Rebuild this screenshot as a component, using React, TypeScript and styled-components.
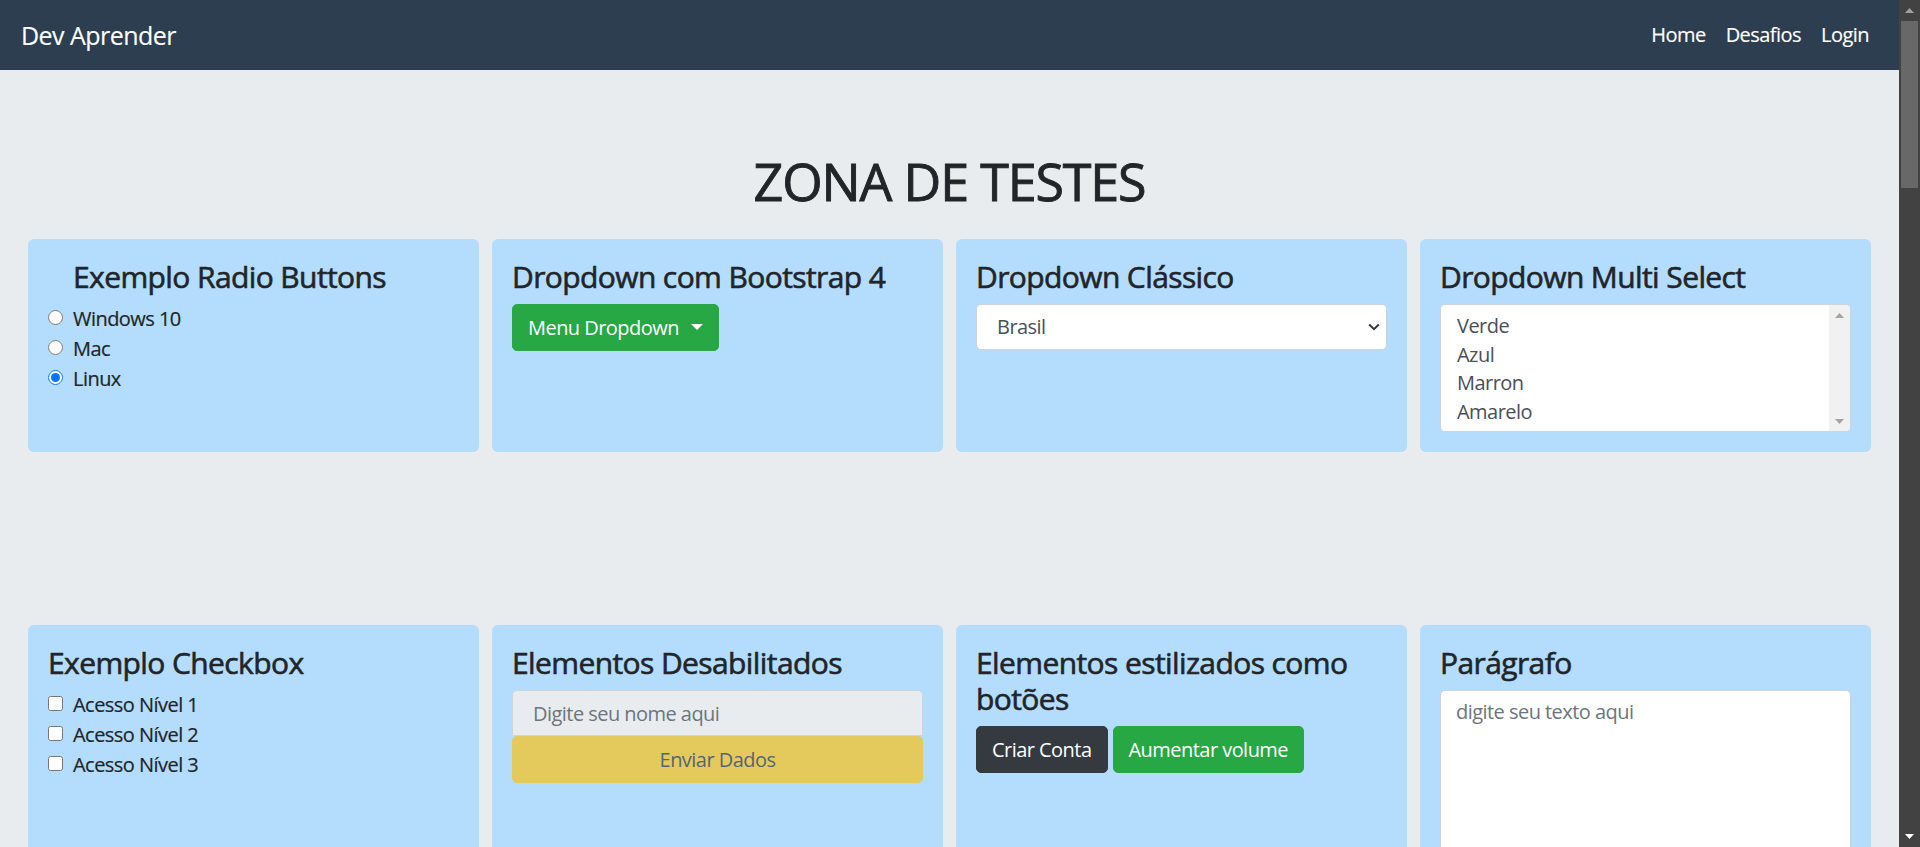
import React from "react";
import styled, { createGlobalStyle } from "styled-components";

const GlobalStyle = createGlobalStyle`
  html, body {
    margin: 0;
    padding: 0;
    height: 100%;
    overflow: hidden;
  }
  body {
    font-family: "Open Sans", "Noto Sans", sans-serif;
    font-size: 20px;
    line-height: 1.5;
    letter-spacing: -0.027em;
    color: #212529;
    background: #e8ecef;
  }
  *, *::before, *::after {
    box-sizing: border-box;
  }
`;

const Shell = styled.div`
  display: flex;
  height: 100vh;
`;

const Viewport = styled.div`
  flex: 1;
  min-width: 0;
  overflow: hidden;
  background: #e8ecef;
`;

const Navbar = styled.nav`
  height: 70px;
  background: #2c3e50;
  display: flex;
  align-items: center;
  justify-content: space-between;
  padding: 0 20px;
`;

const Brand = styled.a`
  color: #fff;
  font-size: 25px;
  line-height: 37px;
  margin-left: 1px;
  text-decoration: none;
  -webkit-text-stroke: 0.15px #fff;
`;

const NavList = styled.ul`
  display: flex;
  list-style: none;
  margin: 0;
  padding: 0;
`;

const NavLink = styled.a`
  display: block;
  padding: 0 10px;
  color: #fff;
  font-size: 20px;
  line-height: 30px;
  text-decoration: none;
  -webkit-text-stroke: 0.15px #fff;
`;

const Main = styled.main`
  padding: 80px 28px 0;
`;

const Title = styled.h1`
  margin: 0 0 27px;
  text-align: center;
  font-size: 52px;
  line-height: 62px;
  font-weight: 400;
  letter-spacing: -0.022em;
  -webkit-text-stroke: 0.9px #212529;
`;

const CardRow = styled.div<{ $after: number }>`
  display: grid;
  grid-template-columns: repeat(4, 1fr);
  gap: 13px;
  margin-bottom: ${(p) => p.$after}px;
`;

const Card = styled.section`
  background: #b4ddfd;
  border-radius: 6px;
  padding: 20px;
  min-width: 0;
`;

const CardTitle = styled.h4<{ $indent?: number }>`
  margin: 0 0 9px;
  padding-left: ${(p) => p.$indent ?? 0}px;
  font-size: 30px;
  line-height: 36px;
  font-weight: 400;
  letter-spacing: -0.02em;
  -webkit-text-stroke: 0.6px #212529;
`;

const ChoiceList = styled.div`
  display: flex;
  flex-direction: column;
  margin-top: 1px;
`;

const Choice = styled.label`
  display: flex;
  align-items: center;
  height: 30px;
  -webkit-text-stroke: 0.2px #212529;
`;

const ChoiceInput = styled.input`
  width: 15px;
  height: 15px;
  margin: 0 10px 3px 0;
  flex: none;
`;

const Button = styled.button<{ $tone: "success" | "dark" | "warning"; $block?: boolean }>`
  display: ${(p) => (p.$block ? "flex" : "inline-flex")};
  width: ${(p) => (p.$block ? "100%" : "auto")};
  align-items: center;
  justify-content: center;
  height: 47px;
  padding: 0 15px;
  font-family: inherit;
  font-size: 20px;
  line-height: 30px;
  letter-spacing: inherit;
  border-radius: 5px;
  border: 1px solid
    ${(p) => (p.$tone === "success" ? "#28a745" : p.$tone === "dark" ? "#343a40" : "#ffc107")};
  background: ${(p) => (p.$tone === "success" ? "#28a745" : p.$tone === "dark" ? "#343a40" : "#ffc107")};
  color: ${(p) => (p.$tone === "warning" ? "#212529" : "#fff")};
  opacity: ${(p) => (p.$tone === "warning" ? 0.65 : 1)};
  cursor: pointer;
`;

const Caret = styled.span`
  display: inline-block;
  margin-left: 12px;
  margin-bottom: 2px;
  width: 0;
  height: 0;
  border-top: 6px solid #fff;
  border-left: 6px solid transparent;
  border-right: 6px solid transparent;
`;

const ButtonGroup = styled.div`
  display: flex;
  gap: 5px;
`;

const SelectBox = styled.div`
  display: flex;
  align-items: center;
  justify-content: space-between;
  height: 46px;
  border: 1px solid #ced4da;
  border-radius: 5px;
  background: #fff;
  padding: 0 6px 0 20px;
  color: #495057;
`;

const ListBox = styled.div`
  display: flex;
  height: 128px;
  border: 1px solid #ced4da;
  border-radius: 5px;
  background: #fff;
  overflow: hidden;
`;

const ListOptions = styled.ul`
  flex: 1;
  margin: 0;
  padding: 7px 0 0 16px;
  list-style: none;
  color: #495057;
  line-height: 28.7px;
`;

const ListScroll = styled.div`
  width: 21px;
  background: #f1f1f1;
  display: flex;
  flex-direction: column;
  justify-content: space-between;
  align-items: center;
  padding: 8px 0 7px;
`;

const TextField = styled.input`
  display: block;
  width: 100%;
  height: 46px;
  padding: 0 20px;
  font-family: inherit;
  font-size: 20px;
  letter-spacing: inherit;
  border: 1px solid #ced4da;
  border-radius: 5px 5px 0 0;
  background: #e9ecef;
  color: #495057;
  &::placeholder {
    color: #6c757d;
  }
`;

const TextArea = styled.textarea`
  display: block;
  width: 100%;
  height: 230px;
  padding: 6px 15px;
  font-family: inherit;
  font-size: 20px;
  line-height: 30px;
  letter-spacing: inherit;
  border: 1px solid #ced4da;
  border-radius: 5px;
  background: #fff;
  resize: none;
  &::placeholder {
    color: #6c757d;
  }
`;

const PageScrollbar = styled.div`
  width: 21px;
  flex: none;
  background: #424242;
  display: flex;
  flex-direction: column;
`;

const ScrollArrow = styled.div`
  height: 21px;
  display: flex;
  align-items: center;
  justify-content: center;
`;

const ScrollThumb = styled.div`
  height: 167px;
  margin: 0 2px;
  background: #686868;
`;

const ScrollSpacer = styled.div`
  flex: 1;
`;

const Tri = ({ dir, color, w = 9, h = 5 }: { dir: "up" | "down"; color: string; w?: number; h?: number }) => (
  <svg width={w} height={h} viewBox={`0 0 ${w} ${h}`}>
    <polygon
      points={dir === "up" ? `0,${h} ${w / 2},0 ${w},${h}` : `0,0 ${w},0 ${w / 2},${h}`}
      fill={color}
    />
  </svg>
);

const Chevron = () => (
  <svg width="12" height="8" viewBox="0 0 12 8">
    <path d="M1.2 1.5 L6 6.2 L10.8 1.5" fill="none" stroke="#343a40" strokeWidth="2" />
  </svg>
);

export default function App() {
  return (
    <>
      <GlobalStyle />
      <Shell>
        <Viewport>
          <Navbar>
            <Brand href="#">Dev Aprender</Brand>
            <NavList>
              <li>
                <NavLink href="#">Home</NavLink>
              </li>
              <li>
                <NavLink href="#">Desafios</NavLink>
              </li>
              <li>
                <NavLink href="#">Login</NavLink>
              </li>
            </NavList>
          </Navbar>
          <Main>
            <Title>ZONA DE TESTES</Title>
            <CardRow $after={173}>
              <Card>
                <CardTitle $indent={25}>Exemplo Radio Buttons</CardTitle>
                <ChoiceList>
                  <Choice>
                    <ChoiceInput type="radio" name="os" />
                    Windows 10
                  </Choice>
                  <Choice>
                    <ChoiceInput type="radio" name="os" />
                    Mac
                  </Choice>
                  <Choice>
                    <ChoiceInput type="radio" name="os" defaultChecked />
                    Linux
                  </Choice>
                </ChoiceList>
              </Card>
              <Card>
                <CardTitle>Dropdown com Bootstrap 4</CardTitle>
                <Button $tone="success">
                  Menu Dropdown
                  <Caret />
                </Button>
              </Card>
              <Card>
                <CardTitle>Dropdown Clássico</CardTitle>
                <SelectBox>
                  <span>Brasil</span>
                  <Chevron />
                </SelectBox>
              </Card>
              <Card>
                <CardTitle>Dropdown Multi Select</CardTitle>
                <ListBox>
                  <ListOptions>
                    <li>Verde</li>
                    <li>Azul</li>
                    <li>Marron</li>
                    <li>Amarelo</li>
                  </ListOptions>
                  <ListScroll>
                    <Tri dir="up" color="#a3a3a3" />
                    <Tri dir="down" color="#a3a3a3" />
                  </ListScroll>
                </ListBox>
              </Card>
            </CardRow>
            <CardRow $after={0}>
              <Card>
                <CardTitle>Exemplo Checkbox</CardTitle>
                <ChoiceList>
                  <Choice>
                    <ChoiceInput type="checkbox" />
                    Acesso Nível 1
                  </Choice>
                  <Choice>
                    <ChoiceInput type="checkbox" />
                    Acesso Nível 2
                  </Choice>
                  <Choice>
                    <ChoiceInput type="checkbox" />
                    Acesso Nível 3
                  </Choice>
                </ChoiceList>
              </Card>
              <Card>
                <CardTitle>Elementos Desabilitados</CardTitle>
                <TextField disabled placeholder="Digite seu nome aqui" />
                <Button $tone="warning" $block disabled>
                  Enviar Dados
                </Button>
              </Card>
              <Card>
                <CardTitle>Elementos estilizados como botões</CardTitle>
                <ButtonGroup>
                  <Button $tone="dark">Criar Conta</Button>
                  <Button $tone="success">Aumentar volume</Button>
                </ButtonGroup>
              </Card>
              <Card>
                <CardTitle>Parágrafo</CardTitle>
                <TextArea placeholder="digite seu texto aqui" />
              </Card>
            </CardRow>
          </Main>
        </Viewport>
        <PageScrollbar>
          <ScrollArrow>
            <Tri dir="up" color="#a0a0a0" />
          </ScrollArrow>
          <ScrollThumb />
          <ScrollSpacer />
          <ScrollArrow>
            <Tri dir="down" color="#ffffff" />
          </ScrollArrow>
        </PageScrollbar>
      </Shell>
    </>
  );
}
